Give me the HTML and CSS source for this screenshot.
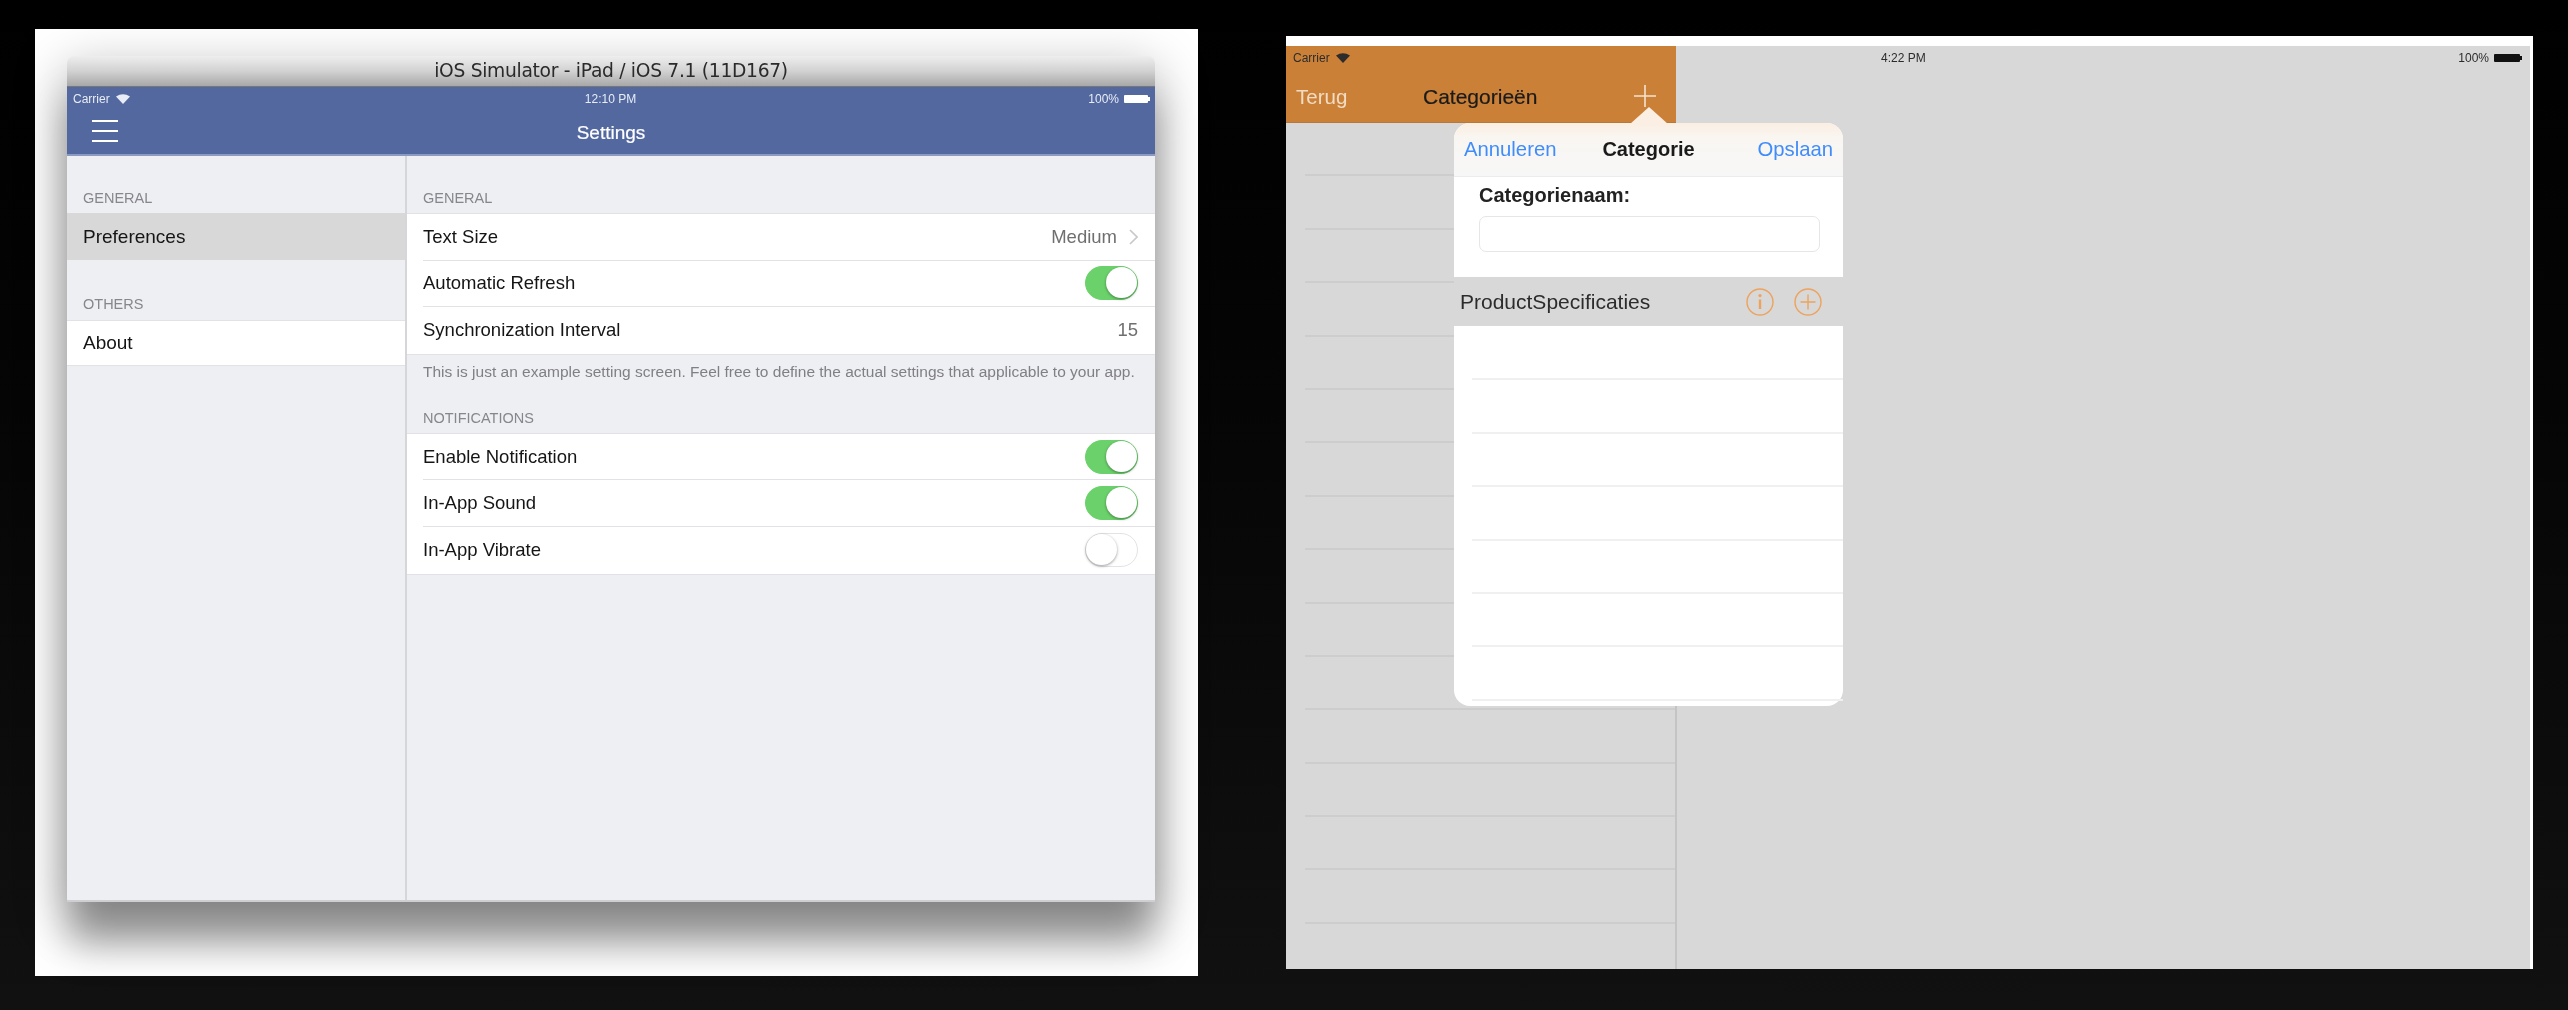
FILE: index.html
```html
<!DOCTYPE html>
<html lang="en">
<head>
  <meta charset="UTF-8">
  <title>iOS Simulator screens</title>
  <link rel="stylesheet" href="styles.css">
</head>
<body>
  <div class="shot shot-settings">
    <div class="window">
      <div class="titlebar">iOS Simulator - iPad / iOS 7.1 (11D167)</div>
      <div class="appbar">
        <div class="status">
          <span class="carrier">Carrier
            <svg class="wifi" viewBox="0 0 14 10"><path d="M0 2.6Q7-2 14 2.6L7 10Z" fill="currentColor"/></svg>
          </span>
          <span class="time">12:10 PM</span>
          <span class="power">100%<i class="battery"></i></span>
        </div>
        <div class="navrow">
          <svg class="burger" viewBox="0 0 26 22"><path d="M0 1H26M0 11H26M0 21H26" stroke="#fff" stroke-width="2"/></svg>
          <span class="navtitle">Settings</span>
        </div>
      </div>
      <div class="split">
        <div class="sidebar">
          <div class="sec-head first">GENERAL</div>
          <div class="side-item selected">Preferences</div>
          <div class="sec-head others">OTHERS</div>
          <div class="side-item plain">About</div>
        </div>
        <div class="detail">
          <div class="sec-head first">GENERAL</div>
          <div class="group">
            <div class="row">
              <span>Text Size</span>
              <span class="value">Medium
                <svg class="chevron" viewBox="0 0 9 16"><path d="M1 1L8 8L1 15" fill="none" stroke="#c7c7cc" stroke-width="1.6"/></svg>
              </span>
            </div>
            <div class="row"><span>Automatic Refresh</span><i class="toggle on"></i></div>
            <div class="row"><span>Synchronization Interval</span><span class="value">15</span></div>
          </div>
          <p class="note">This is just an example setting screen. Feel free to define the actual settings that applicable to your app.</p>
          <div class="sec-head second">NOTIFICATIONS</div>
          <div class="group">
            <div class="row"><span>Enable Notification</span><i class="toggle on"></i></div>
            <div class="row"><span>In-App Sound</span><i class="toggle on"></i></div>
            <div class="row"><span>In-App Vibrate</span><i class="toggle"></i></div>
          </div>
        </div>
      </div>
    </div>
  </div>

  <div class="shot shot-category">
    <div class="tablet">
      <div class="master">
        <div class="orange">
          <div class="status dark">
            <span class="carrier">Carrier
              <svg class="wifi" viewBox="0 0 14 10"><path d="M0 2.6Q7-2 14 2.6L7 10Z" fill="currentColor"/></svg>
            </span>
          </div>
          <div class="orange-nav">
            <span class="back">Terug</span>
            <span class="orange-title">Categorieën</span>
            <svg class="add" viewBox="0 0 22 22"><path d="M11 0V22M0 11H22" stroke="#f4e3d2" stroke-width="1.6"/></svg>
          </div>
        </div>
        <div class="list">
          <div class="line"></div><div class="line"></div><div class="line"></div><div class="line"></div>
          <div class="line"></div><div class="line"></div><div class="line"></div><div class="line"></div>
          <div class="line"></div><div class="line"></div><div class="line"></div><div class="line"></div>
          <div class="line"></div><div class="line"></div><div class="line"></div>
        </div>
      </div>
      <div class="pane">
        <div class="status dark pane-status">
          <span class="time">4:22 PM</span>
          <span class="power">100%<i class="battery black"></i></span>
        </div>
      </div>

      <div class="popover">
        <i class="arrow"></i>
        <div class="pop-head">
          <span class="link">Annuleren</span>
          <span class="pop-title">Categorie</span>
          <span class="link right">Opslaan</span>
        </div>
        <div class="form">
          <label class="form-label">Categorienaam:</label>
          <div class="field"></div>
        </div>
        <div class="band">
          <span>ProductSpecificaties</span>
          <span class="band-icons">
            <svg class="round" viewBox="0 0 28 28"><circle cx="14" cy="14" r="13" fill="none" stroke="#eda35c" stroke-width="1.4"/><path d="M14 11.5V21" stroke="#eda35c" stroke-width="2.4"/><circle cx="14" cy="7.6" r="1.6" fill="#eda35c"/></svg>
            <svg class="round" viewBox="0 0 28 28"><circle cx="14" cy="14" r="13" fill="none" stroke="#eda35c" stroke-width="1.4"/><path d="M14 6.5V21.5M6.5 14H21.5" stroke="#eda35c" stroke-width="1.4"/></svg>
          </span>
        </div>
        <div class="pop-list">
          <div class="pop-line"></div><div class="pop-line"></div><div class="pop-line"></div><div class="pop-line"></div>
          <div class="pop-line"></div><div class="pop-line"></div><div class="pop-line"></div>
        </div>
      </div>
    </div>
  </div>
</body>
</html>
```

FILE: styles.css
```css
:root {
  --blue: #53689f;
  --orange: #cb8038;
  --grey: #d8d8d8;
  --ios-bg: #eeeff3;
  --sep: #e2e2e6;
  --link: #3f8cfb;
}

* {
  box-sizing: border-box;
}

html, body {
  height: 100%;
}

body {
  margin: 0;
  padding: 29px 0 0 35px;
  display: flex;
  align-items: flex-start;
  background: linear-gradient(#000 0, #050505 40%, #111 100%);
  font-family: "Liberation Sans", Arial, sans-serif;
  color: #151515;
  overflow: hidden;
}

.shot {
  flex: none;
  background: #fff;
  filter: blur(0.7px);
}

/* left screenshot */
.shot-settings {
  width: 1163px;
  height: 947px;
  padding: 27px 0 0 32px;
}

.window {
  width: 1088px;
  height: 846px;
  display: flex;
  flex-direction: column;
  border-radius: 8px 8px 3px 3px;
  background: var(--ios-bg);
  box-shadow: 0 44px 38px -2px rgba(0, 0, 0, 0.34), 0 14px 50px 4px rgba(0, 0, 0, 0.26);
}

.titlebar {
  height: 31px;
  flex: none;
  border-radius: 8px 8px 0 0;
  border-bottom: 1px solid #777;
  background: linear-gradient(#eee, #d2d2d2 50%, #a8a8a8);
  font-family: "DejaVu Sans", sans-serif;
  font-size: 18.7px;
  line-height: 30px;
  letter-spacing: -0.3px;
  text-align: center;
  color: #2a2a2a;
}

.appbar {
  height: 69px;
  flex: none;
  background: var(--blue);
  border-bottom: 2px solid #8a9ac2;
  color: #fff;
}

.status {
  height: 24px;
  padding: 0 7px 0 6px;
  display: grid;
  grid-template-columns: 1fr auto 1fr;
  align-items: center;
  font-size: 12px;
  color: #e8ecf6;
}

.carrier {
  display: flex;
  align-items: center;
  gap: 6px;
}

.wifi {
  width: 14px;
  height: 10px;
}

.power {
  display: flex;
  align-items: center;
  justify-content: flex-end;
  gap: 5px;
}

.battery {
  width: 24px;
  height: 8px;
  position: relative;
  background: #fff;
  border-radius: 1px;
}

.battery::after {
  content: "";
  position: absolute;
  right: -2px;
  top: 2px;
  width: 2px;
  height: 4px;
  background: inherit;
}

.navrow {
  height: 43px;
  position: relative;
  display: flex;
  align-items: center;
  justify-content: center;
}

.navtitle {
  font-size: 19px;
  -webkit-text-stroke: 0.2px #fff;
}

.burger {
  position: absolute;
  left: 25px;
  top: 9px;
  width: 26px;
  height: 22px;
}

.split {
  flex: 1;
  display: flex;
  border-bottom: 2px solid #cfcfd3;
}

.sidebar {
  width: 340px;
  flex: none;
  border-right: 2px solid #d6d6da;
}

.detail {
  flex: 1;
}

.sec-head {
  display: flex;
  align-items: flex-end;
  padding-left: 16px;
  font-size: 14.5px;
  color: #86868c;
}

.sec-head.first {
  height: 57px;
  padding-bottom: 7px;
}

.sec-head.others {
  height: 60px;
  padding-bottom: 8px;
}

.sec-head.second {
  height: 44px;
  padding-bottom: 7px;
}

.side-item {
  height: 46px;
  padding-left: 16px;
  display: flex;
  align-items: center;
  font-size: 19px;
}

.side-item.selected {
  height: 47px;
  background: var(--grey);
}

.side-item.plain {
  background: #fff;
  border-top: 1.5px solid var(--sep);
  border-bottom: 1.5px solid var(--sep);
}

.group {
  background: #fff;
  border-top: 1.5px solid var(--sep);
  border-bottom: 1.5px solid var(--sep);
}

.row {
  height: 46.6px;
  margin-left: 16px;
  padding-right: 17px;
  display: flex;
  align-items: center;
  justify-content: space-between;
  font-size: 18.5px;
  border-bottom: 1.5px solid var(--sep);
}

.row:last-child {
  border-bottom: none;
}

.value {
  display: flex;
  align-items: center;
  gap: 12px;
  color: #6f6f6f;
}

.chevron {
  width: 9px;
  height: 16px;
}

.note {
  height: 34px;
  margin: 0;
  padding: 8px 0 0 16px;
  font-size: 15.5px;
  color: #808084;
}

.toggle {
  width: 53px;
  height: 34px;
  position: relative;
  border-radius: 17px;
  border: 1px solid #e3e3e3;
  background: #fff;
}

.toggle::after {
  content: "";
  position: absolute;
  left: 0;
  top: 0;
  width: 31px;
  height: 31px;
  border-radius: 50%;
  background: #fff;
  box-shadow: 0 1px 3px rgba(0, 0, 0, 0.4);
}

.toggle.on {
  background: #6bd26b;
  border-color: #6bd26b;
}

.toggle.on::after {
  left: 20px;
}

/* right screenshot */
.shot-category {
  width: 1247px;
  height: 933px;
  margin: 7px 0 0 88px;
  padding: 10px 3px 0 0;
}

.tablet {
  height: 923px;
  position: relative;
  display: flex;
  background: var(--grey);
}

.master {
  width: 391px;
  flex: none;
  display: flex;
  flex-direction: column;
}

.orange {
  height: 77px;
  width: 390px;
  flex: none;
  background: var(--orange);
  border-bottom: 1px solid #b9783b;
}

.status.dark {
  color: #2c2c2c;
}

.orange .status {
  padding-left: 7px;
}

.orange-nav {
  position: relative;
  display: flex;
  align-items: center;
  height: 52px;
  padding: 2px 0 0 10px;
  font-size: 20.5px;
}

.back {
  width: 127px;
  color: #f2dcc4;
}

.orange-title {
  font-size: 21px;
  color: #1a1a1a;
  -webkit-text-stroke: 0.2px #1a1a1a;
}

.add {
  position: absolute;
  left: 348px;
  top: 15px;
  width: 22px;
  height: 22px;
}

.list {
  flex: 1;
  border-right: 2px solid #c4c4c4;
}

.line {
  height: 53.4px;
  margin-left: 19px;
  border-bottom: 2px solid #cdcdcd;
}

.pane {
  flex: 1;
}

.pane-status {
  display: flex;
  justify-content: space-between;
  padding: 0 10px 0 204px;
}

.battery.black {
  width: 26px;
  background: #111;
}

.popover {
  position: absolute;
  left: 168px;
  top: 77px;
  width: 389px;
  height: 583px;
  border-radius: 16px;
  background: #fff;
}

.arrow {
  position: absolute;
  left: 176px;
  top: -16px;
  width: 38px;
  height: 17px;
  background: #fbeee2;
  clip-path: polygon(50% 0, 100% 100%, 0 100%);
}

.pop-head {
  height: 54px;
  padding: 0 10px;
  display: grid;
  grid-template-columns: 1fr auto 1fr;
  align-items: center;
  border-radius: 16px 16px 0 0;
  border-bottom: 1px solid #ececec;
  background: linear-gradient(#fbeee2, #f9f6f2 30%, #f7f7f7);
  font-size: 20.3px;
}

.link {
  color: var(--link);
}

.link.right {
  text-align: right;
}

.pop-title {
  font-size: 20px;
  font-weight: bold;
  color: #1a1a1a;
}

.form {
  height: 100px;
  padding: 7px 23px 0 25px;
}

.form-label {
  display: block;
  font-size: 20px;
  font-weight: bold;
  color: #222;
  margin-bottom: 9px;
}

.field {
  height: 36px;
  border: 1.5px solid #e6e6e6;
  border-radius: 7px;
}

.band {
  height: 49px;
  padding: 1px 21px 0 6px;
  display: flex;
  align-items: center;
  justify-content: space-between;
  background: var(--grey);
  font-size: 21px;
  color: #2c2c2c;
}

.band-icons {
  display: flex;
  gap: 20px;
}

.round {
  width: 28px;
  height: 28px;
}

.pop-list {
  padding-top: 1px;
}

.pop-line {
  height: 53.4px;
  margin-left: 18px;
  border-bottom: 2px solid #f0f0f0;
}
```
